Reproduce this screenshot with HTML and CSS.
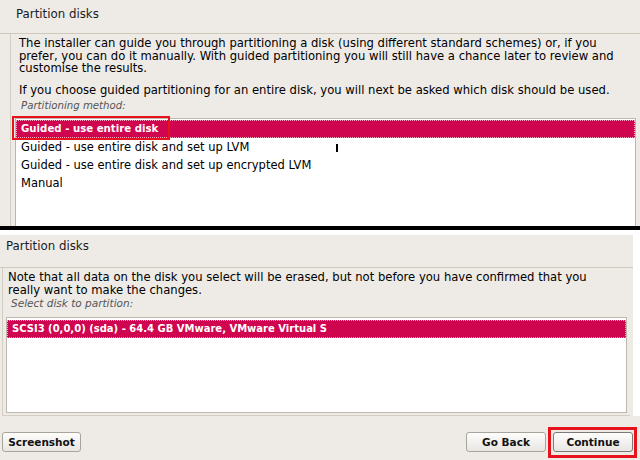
FILE: index.html
```html
<!DOCTYPE html>
<html lang="en">
<head>
  <meta charset="UTF-8" />
  <title>Partition disks</title>
  <link rel="stylesheet" href="styles.css">
</head>
<body>
  <div class="shot shot-top">
    <div class="title">Partition disks</div>
    <div class="frame">
      <p class="msg">The installer can guide you through partitioning a disk (using different standard schemes) or, if you<br>prefer, you can do it manually. With guided partitioning you will still have a chance later to review and<br>customise the results.</p>
      <p class="msg gap">If you choose guided partitioning for an entire disk, you will next be asked which disk should be used.</p>
      <p class="label">Partitioning method:</p>
      <ul class="list">
        <li class="sel">Guided - use entire disk<span class="mark"></span></li>
        <li>Guided - use entire disk and set up LVM</li>
        <li>Guided - use entire disk and set up encrypted LVM</li>
        <li>Manual</li>
        <span class="ibeam"></span>
      </ul>
    </div>
  </div>

  <div class="cut"></div>

  <div class="shot shot-bottom">
    <div class="main">
      <div class="title title-low">Partition disks</div>
      <div class="frame frame-low">
        <p class="msg">Note that all data on the disk you select will be erased, but not before you have confirmed that you<br>really want to make the changes.</p>
        <p class="label">Select disk to partition:</p>
        <ul class="list list-low">
          <li class="sel">SCSI3 (0,0,0) (sda) - 64.4 GB VMware, VMware Virtual S</li>
        </ul>
      </div>
    </div>
    <div class="buttons">
      <button class="btn">Screenshot</button>
      <button class="btn back">Go Back</button>
      <button class="btn focus">Continue<span class="mark"></span></button>
    </div>
  </div>
</body>
</html>
```

FILE: styles.css
```css
body {
  margin: 0;
  padding: 0;
  width: 640px;
  height: 460px;
  overflow: hidden;
  background: #ffffff;
  font-family: 'DejaVu Sans', sans-serif;
  font-size: 10.5px;
  color: #000;
}

.shot {
  background: #eeebe7;
}

.shot-top {
  height: 226px;
  overflow: hidden;
}

.title {
  height: 33px;
  line-height: 28px;
  padding-left: 16px;
  font-size: 11.8px;
  color: #1a1a1a;
  border-bottom: 1px solid #cfc8bd;
}

.frame {
  margin-left: 10px;
  border-left: 1px solid #d3cdc4;
  padding: 3px 0 0 4px;
}

.msg {
  margin: 0;
  padding: 0 4px;
  font-size: 11.6px;
  line-height: 12.5px;
  white-space: nowrap;
}

.msg.gap {
  margin-top: 9.5px;
}

.label {
  margin: 3.5px 0 0;
  padding-left: 6px;
  line-height: 12.5px;
  font-size: 10.2px;
  font-style: italic;
  color: #555;
}

.list {
  position: relative;
  list-style: none;
  margin: 5.5px 0 0;
  padding: 1px 0 0;
  width: 621px;
  height: 120px;
  box-sizing: border-box;
  background: #fff;
  border: 1px solid #bdb7ad;
  border-bottom: none;
}

.list li {
  height: 18px;
  line-height: 18px;
  padding-left: 5px;
  font-size: 11.5px;
}

.list li.sel {
  position: relative;
  background: #d0054f;
  color: #fff;
  font-weight: bold;
  font-size: 10.2px;
  box-sizing: border-box;
  border: 1px dotted #f3a6c0;
  line-height: 16px;
  padding-left: 4px;
}

.mark {
  position: absolute;
  box-sizing: border-box;
  border: 2px solid #e8121c;
}

.list li.sel .mark {
  left: -5px;
  top: -5px;
  width: 158px;
  height: 24px;
}

.ibeam {
  position: absolute;
  left: 320px;
  top: 25px;
  width: 2px;
  height: 8px;
  background: #000;
}

.cut {
  height: 4px;
  background: #000;
  border-bottom: 5px solid #fff;
}

.shot-bottom {
  background: #fff;
  height: 225px;
}

.main {
  width: 633px;
  background: #eeebe7;
}

.title-low {
  height: 32px;
  line-height: 22px;
  padding-left: 6px;
}

.frame-low {
  margin: 0 3px 0 2px;
  padding: 3px 3px 2px 3px;
  border-bottom: 1px solid #d3cdc4;
}

.frame-low .msg {
  padding: 0 2px;
}

.frame-low .label {
  margin-top: 1px;
  padding-left: 5px;
  font-size: 10.5px;
}

.list-low {
  margin-top: 7.5px;
  width: 621px;
  height: 96px;
  padding-top: 2px;
  border-bottom: 1px solid #bdb7ad;
}

.list-low li.sel {
  padding-left: 4px;
  font-size: 10px;
}

.buttons {
  display: flex;
  gap: 7px;
  height: 44px;
  box-sizing: border-box;
  padding: 16px 7px 0 2px;
  background: #eeebe7;
}

.btn {
  position: relative;
  width: 80px;
  height: 20px;
  padding: 0;
  border: 1px solid #a9a49b;
  border-radius: 3px;
  background: linear-gradient(#fdfdfc, #e8e6e2);
  font-family: 'DejaVu Sans', sans-serif;
  font-size: 10.5px;
  font-weight: bold;
  color: #111;
}

.btn:first-child {
  width: 79px;
}

.back {
  margin-left: auto;
}

.focus {
  border-color: #7d7a74;
}

.focus .mark {
  left: -6px;
  top: -6px;
  width: 89px;
  height: 31px;
  border-width: 3px;
}
```
